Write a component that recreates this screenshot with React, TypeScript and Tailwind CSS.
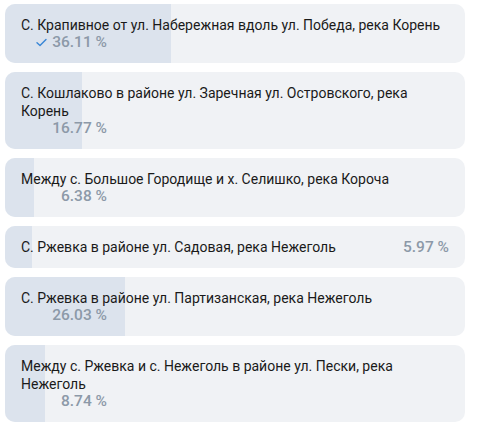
import React from 'react';

type Option = { text: string; percent: number; chosen?: boolean; inline?: boolean };

const options: Option[] = [
  { text: 'С. Крапивное от ул. Набережная вдоль ул. Победа, река Корень', percent: 36.11, chosen: true },
  { text: 'С. Кошлаково в районе ул. Заречная ул. Островского, река Корень', percent: 16.77 },
  { text: 'Между с. Большое Городище и х. Селишко, река Короча', percent: 6.38 },
  { text: 'С. Ржевка в районе ул. Садовая, река Нежеголь', percent: 5.97, inline: true },
  { text: 'С. Ржевка в районе ул. Партизанская, река Нежеголь', percent: 26.03 },
  { text: 'Между с. Ржевка и с. Нежеголь в районе ул. Пески, река Нежеголь', percent: 8.74 },
];

const Check = () => (
  <svg width="11" height="9" viewBox="0 0 11 9" className="mr-[5px] inline-block">
    <path d="M1 4.8 L4 7.6 L10 1.4" fill="none" stroke="#3a87d6" strokeWidth="1.4" strokeLinecap="round" strokeLinejoin="round" />
  </svg>
);

const PollRow = ({ opt }: { opt: Option }) => {
  const pct = opt.percent.toFixed(2) + ' %';
  return (
    <div className="relative overflow-hidden rounded-[10px] bg-[#f0f2f5]">
      <div className="absolute inset-y-0 left-0 bg-[#dce3ed]" style={{ width: `${opt.percent}%` }} />
      <div className="relative px-[16px] py-[12px] text-[14px] leading-[18px] text-[#1a1a1a]">
        {opt.inline ? (
          <div className="flex items-center justify-between">
            <span>{opt.text}</span>
            <span className="text-[15.5px] font-medium text-[#8c99a8]">{pct}</span>
          </div>
        ) : (
          <>
            <div>{opt.text}</div>
            <div className="flex w-[86px] items-center justify-end text-[15.5px] leading-[17px] font-medium text-[#8c99a8]">
              {opt.chosen && <Check />}
              {pct}
            </div>
          </>
        )}
      </div>
    </div>
  );
};

export default function App() {
  return (
    <div className="h-[430px] w-[477px] bg-white" style={{ fontFamily: 'Roboto, "Noto Sans", sans-serif' }}>
      <div className="box-content flex w-[460px] flex-col gap-[9px] pl-[5px] pt-[4px]">
        {options.map((o) => (
          <PollRow key={o.text} opt={o} />
        ))}
      </div>
    </div>
  );
}
